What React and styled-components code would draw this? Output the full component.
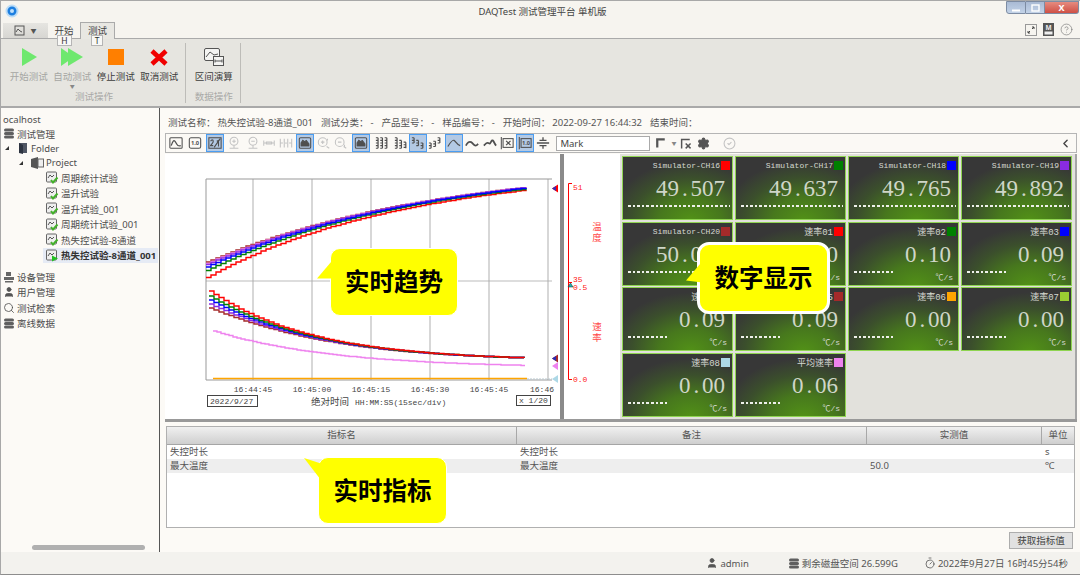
import React from "react";
import styled, { createGlobalStyle } from "styled-components";
import { User, Search, Settings, ChevronLeft, CircleCheck, CircleHelp, Timer } from "lucide-react";

const GlobalStyle = createGlobalStyle`
  html, body { margin: 0; padding: 0; background: #fff; }
  * { box-sizing: border-box; }
  #root { width: 1080px; height: 579px; overflow: hidden; }
`;

const sans = `"Noto Sans", "Noto Sans CJK SC", sans-serif`;
const mono = `"Liberation Mono", "Noto Sans CJK SC", monospace`;

const Page = styled.div`
  position: relative;
  width: 1080px;
  height: 575px;
  display: flex;
  flex-direction: column;
  font-family: ${sans};
  font-size: 9.5px;
  color: #555;
  background: #f7f5f0;
  border-top: 1px solid #a8a8a8;
  border-left: 1px solid #a8a8a8;
  border-bottom: 1px solid #8d8d8d;
`;

const TitleBar = styled.div`
  height: 20px;
  display: grid;
  grid-template-columns: 1fr auto 1fr;
  align-items: center;
  padding-left: 4px;
  background: #f6f4ef;
`;

const Title = styled.div`
  font-size: 9.5px;
  color: #444;
`;

const WinButtons = styled.div`
  justify-self: end;
  align-self: start;
  display: flex;
  height: 13px;
  margin-right: 1px;
`;

const WinButton = styled.div`
  width: ${(p) => p.$w}px;
  display: flex;
  align-items: center;
  justify-content: center;
  border: 1px solid #7d8ca3;
  border-left-width: ${(p) => (p.$first ? 1 : 0)}px;
  border-radius: ${(p) => (p.$first ? "0 0 0 3px" : p.$close ? "0 0 3px 0" : "0")};
  background: ${(p) =>
    p.$close ? "linear-gradient(#e58b7f, #cf5045)" : "linear-gradient(#a9bad4, #c3d3e8)"};
  color: #fff;
  font-size: 9px;
  font-weight: 700;
`;

const TabStrip = styled.div`
  position: relative;
  height: 17px;
  display: flex;
  align-items: flex-end;
  background: #f6f4ef;
`;

const QuickAccess = styled.div`
  width: 45px;
  height: 15px;
  margin-left: 2px;
  display: flex;
  align-items: center;
  justify-content: center;
  gap: 5px;
  background: linear-gradient(#e6e5e1, #d7d6d2);
  color: #555;
  font-size: 6px;
`;

const Tab = styled.div`
  width: ${(p) => p.$w}px;
  height: ${(p) => (p.$active ? 17 : 15)}px;
  text-align: center;
  line-height: 15px;
  font-size: 9.5px;
  color: #444;
  margin-bottom: ${(p) => (p.$active ? -1 : 0)}px;
  z-index: 1;
  background: ${(p) => (p.$active ? "#e8e7e2" : "transparent")};
  border: ${(p) => (p.$active ? "1px solid #aaa" : "none")};
  border-bottom: none;
`;

const KeyTip = styled.div`
  position: absolute;
  left: ${(p) => p.$left}px;
  top: 14px;
  width: ${(p) => p.$w}px;
  height: 11px;
  z-index: 2;
  text-align: center;
  line-height: 10px;
  font-size: 8.5px;
  background: #f8f8f6;
  border: 1px solid #b5b5b5;
  color: #333;
`;

const StripIcons = styled.div`
  margin-left: auto;
  margin-right: 7px;
  align-self: center;
  display: flex;
  align-items: center;
  gap: 5px;
  color: #666;
`;

const Ribbon = styled.div`
  height: 70px;
  display: flex;
  background: #e6e5e0;
  border-top: 1px solid #aaa;
  border-bottom: 2px solid #a9a9a9;
  padding: 4px 0 0 6px;
`;

const RibbonGroup = styled.div`
  display: flex;
  flex-direction: column;
  align-items: center;
  height: 60px;
  padding-right: 4px;
  margin-right: 6px;
  border-right: 1px solid #bdbcb8;
`;

const RibbonButtons = styled.div`
  flex: 1;
  display: flex;
`;

const RibbonButton = styled.div`
  width: 43.5px;
  display: flex;
  flex-direction: column;
  align-items: center;
  padding-top: 4px;
  color: ${(p) => (p.$off ? "#a5a5a3" : "#3c3c3c")};
  font-size: 9.5px;
  line-height: 13px;
  svg { margin-bottom: 3px; }
`;

const Caret = styled.div`
  font-size: 5px;
  line-height: 6px;
  color: #888;
`;

const GroupCaption = styled.div`
  color: #a9a9a7;
  font-size: 9.5px;
  line-height: 10px;
  margin-bottom: 1px;
`;

const Body = styled.div`
  flex: 1;
  min-height: 0;
  display: flex;
  background: #fcfaf6;
`;

const Sidebar = styled.div`
  position: relative;
  width: 159px;
  padding-top: 4px;
  border-right: 1px solid #555;
  color: #4d4d4d;
`;

const TreeRow = styled.div`
  height: ${(p) => p.$h || 14.5}px;
  display: flex;
  align-items: center;
  gap: 2px;
  padding-left: ${(p) => p.$indent || 0}px;
  margin-top: ${(p) => p.$mt || 0}px;
  white-space: nowrap;
`;

const Selected = styled.div`
  display: flex;
  align-items: center;
  gap: 2px;
  margin-left: -3px;
  padding-left: 3px;
  width: 115px;
  height: 15px;
  background: #e6ebf5;
  font-weight: 700;
  color: #333;
`;

const Fold = styled.span`
  width: 0;
  height: 0;
  margin-right: 6px;
  border-left: 4px solid transparent;
  border-bottom: 4px solid #333;
`;

const SideScroll = styled.div`
  position: absolute;
  left: 31px;
  right: 14px;
  bottom: 2px;
  height: 5px;
  border-radius: 3px;
  background: #b0b0b0;
`;

const Main = styled.div`
  flex: 1;
  min-width: 0;
  display: flex;
  flex-direction: column;
  padding: 0 3px 0 5px;
`;

const InfoRow = styled.div`
  height: 25px;
  padding: 3px 0 0 3px;
  display: flex;
  align-items: center;
  gap: 8px;
  color: #555;
  white-space: nowrap;
`;

const InfoValue = styled.span`
  margin-left: 2px;
`;

const Toolbar = styled.div`
  height: 20px;
  display: flex;
  align-items: center;
  padding-left: 1px;
  background: #fbf9f5;
  border: 1px solid #b5b5b5;
`;

const ToolSlot = styled.div`
  width: ${(p) => p.$w || 18.4}px;
  display: flex;
  justify-content: center;
`;

const ToolButton = styled.div`
  width: 16px;
  height: 16px;
  display: flex;
  align-items: center;
  justify-content: center;
  color: ${(p) => (p.$dim ? "#c3c3c3" : "#4f4f4f")};
  background: ${(p) => (p.$on ? "#b3c9e4" : "transparent")};
  outline: ${(p) => (p.$on ? "1px solid #4a9df2" : "none")};
`;

const MarkInput = styled.div`
  width: 94px;
  height: 15px;
  margin-left: 4px;
  padding-left: 3px;
  line-height: 14px;
  background: #fff;
  border: 1px solid #aaa;
  color: #444;
`;

const ToolRight = styled.div`
  flex: 1;
  display: flex;
  align-items: center;
  gap: 4px;
  margin-left: 5px;
  padding-right: 4px;
  color: #555;
`;

const Workspace = styled.div`
  height: 269px;
  display: flex;
  padding-top: 1px;
  border-bottom: 3px solid #999;
`;

const ChartPanel = styled.svg`
  display: block;
  width: 395px;
  height: 265px;
  background: #fff;
`;

const Splitter = styled.div`
  width: 4px;
  background: #8a8a8a;
`;

const AxisPanel = styled.svg`
  display: block;
  width: 56px;
  height: 265px;
  background: #fff;
`;

const CardsPanel = styled.div`
  flex: 1;
  display: grid;
  grid-template-columns: repeat(4, 111px);
  grid-auto-rows: 64px;
  gap: 1.6px 2px;
  padding: 2px 0 0 2px;
  background: #e2e1dc;
  border-right: 2px solid #a5a5a5;
`;

const Card = styled.div`
  display: flex;
  flex-direction: column;
  padding: 4px 2px 0 5px;
  border: 1px solid #8fd451;
  background: radial-gradient(ellipse 75% 95% at 62% 102%, #529117 0%, #47781d 38%, #3b4f2c 72%, #373737 100%);
  color: #d5d8d0;
`;

const CardHead = styled.div`
  display: flex;
  justify-content: flex-end;
  align-items: center;
  gap: 1px;
  height: 9px;
  font-family: ${mono};
  font-size: ${(p) => (p.$latin ? 8 : 9)}px;
  white-space: nowrap;
`;

const Swatch = styled.span`
  width: 9px;
  height: 9px;
  background: ${(p) => p.$color};
`;

const CardValue = styled.div`
  height: 30px;
  margin-top: 4px;
  padding-right: 5px;
  display: flex;
  justify-content: flex-end;
  align-items: center;
  font-family: "Liberation Serif", serif;
  font-size: 23px;
  color: #cfd6c8;
`;

const Digit = styled.span`
  width: 11.5px;
  text-align: center;
`;

const Dots = styled.div`
  width: ${(p) => (p.$wide ? 102 : 41)}px;
  height: 2px;
  margin-top: 1px;
  background: repeating-linear-gradient(90deg, #eef0ea 0 2.6px, transparent 2.6px 4.6px);
`;

const CardUnit = styled.div`
  height: 10px;
  padding-right: 3px;
  text-align: right;
  line-height: 9px;
  font-family: ${mono};
  font-size: 8px;
`;

const MetricTable = styled.div`
  height: 102px;
  margin: 4px 2px 0 1px;
  background: #fff;
  border: 1px solid #b0b0b0;
`;

const TableRow = styled.div`
  display: grid;
  grid-template-columns: 350px 350px 175px 1fr;
  height: ${(p) => (p.$head ? 18 : 14)}px;
  line-height: ${(p) => (p.$head ? 16 : 14)}px;
  background: ${(p) => (p.$head ? "linear-gradient(#f0f0f0, #cfcfcf)" : p.$alt ? "#eeeeee" : "#fff")};
  border-bottom: ${(p) => (p.$head ? "1px solid #a5a5a5" : "none")};
`;

const HeadCell = styled.div`
  text-align: center;
  color: #555;
  border-right: 1px solid #a8a8a8;
  &:last-child { border-right: none; }
`;

const Cell = styled.div`
  padding-left: 3px;
  color: #555;
`;

const TableFoot = styled.div`
  height: 24px;
  display: flex;
  justify-content: flex-end;
  align-items: center;
  padding-right: 4px;
`;

const FetchButton = styled.div`
  width: 64px;
  height: 17px;
  text-align: center;
  line-height: 15px;
  background: #e1e1e1;
  border: 1px solid #adadad;
  color: #444;
`;

const StatusBar = styled.div`
  height: 22px;
  display: flex;
  justify-content: flex-end;
  align-items: center;
  padding-right: 12px;
  gap: 26px;
  background: #f3f2ee;
  color: #555;
`;

const StatusItem = styled.div`
  display: flex;
  align-items: center;
  gap: 2px;
  white-space: nowrap;
  margin-right: ${(p) => p.$mr || 0}px;
`;

const Callout = styled.div`
  position: absolute;
  z-index: 5;
  left: ${(p) => p.$left}px;
  top: ${(p) => p.$top}px;
  width: ${(p) => p.$w}px;
  height: ${(p) => p.$h}px;
  padding-bottom: 3px;
  display: flex;
  align-items: center;
  justify-content: center;
  background: #ffff00;
  border: ${(p) => p.$line}px solid #fff;
  border-radius: ${(p) => p.$radius}px;
  color: #000;
  font-family: "Noto Sans CJK SC", sans-serif;
  font-size: 24.5px;
  font-weight: 700;

  &::before {
    content: "";
    position: absolute;
    left: ${(p) => p.$tailX}px;
    top: ${(p) => p.$tailY}px;
    width: 20px;
    height: 26px;
    background: #ffff00;
    clip-path: ${(p) => p.$tail};
  }
`;

const IconBox = ({ children, size = 14, vb = 16, ...rest }) => (
  <svg width={size} height={size} viewBox={`0 0 ${vb} ${vb}`} fill="none" stroke="currentColor" strokeWidth="1.2" {...rest}>
    {children}
  </svg>
);

// three stacked discs, used for the data nodes and the disk readout
const StackIcon = () => (
  <svg width="12" height="11" viewBox="0 0 12 11" fill="#5f5f5f">
    <rect x="1" y="0.5" width="10" height="3" rx="1.5" />
    <rect x="1" y="4" width="10" height="3" rx="1.5" />
    <rect x="1" y="7.5" width="10" height="3" rx="1.5" />
  </svg>
);

// a column of little "]" brackets, as in the stacked-axis buttons
const column = (x, y0, y1) => {
  let d = `M${x} ${y0}V${y1}`;
  for (let y = y0; y <= y1; y += 3) d += `M${x - 2.5} ${y}H${x}`;
  return d;
};

const bars = (ranges) => (
  <path d={ranges.map(([y0, y1], i) => column(3.5 + i * 5, y0, y1)).join("")} strokeWidth="1.4" />
);

const glyphs = {
  wave: <><rect x="1" y="2" width="14" height="12" rx="1" /><path d="M2.5 11c2-6 3-7 5-4s2 5 6 4" strokeWidth="1.4" /></>,
  num: <><rect x="1.5" y="2" width="13" height="12" rx="2" /><text x="8" y="10.5" fontSize="6.5" fontWeight="700" textAnchor="middle" fill="currentColor" stroke="none">1.0</text></>,
  waveCross: <><rect x="1" y="2" width="14" height="12" /><path d="M3 6c1-2 3-2 3 0s-2 3-3 5h3M14 3L7 13M10 6l2-1v7" strokeWidth="1.3" /></>,
  zoomIn: <><circle cx="8" cy="6" r="4.5" /><path d="M6 6h4M8 4v4M3 14h10M8 10.5V14" /></>,
  zoomOut: <><circle cx="8" cy="6" r="4.5" /><path d="M6 6h4M3 14h10M8 10.5V14" /></>,
  span: <path d="M2 5v6M14 5v6M2 8h3M11 8h3M5 7h6v2H5z" />,
  spanIn: <path d="M1.5 3v10M14.5 3v10M6 3v10M10 3v10M2 8h2.5M11.5 8H14M8 7v2" />,
  photo: <><rect x="1.5" y="2" width="13" height="12" rx="1.5" /><path d="M3.5 11.5V8l2-3 2 1.5L9.5 5l3 4v2.5z" fill="currentColor" /></>,
  lensPlus: <><circle cx="6.5" cy="7" r="5" /><path d="M4.5 7h4M6.5 5v4M12 3v2M11 12l3 2" /></>,
  lensMinus: <><circle cx="6.5" cy="7" r="5" /><path d="M4.5 7h4M12 10v3M11 12l3 2" /></>,
  bars1: bars([[2, 14], [2, 14], [2, 14]]),
  bars2: bars([[2, 14], [5, 14], [7, 14]]),
  bars3: bars([[2, 8], [5, 11], [8, 14]]),
  bars4: bars([[8, 14], [6, 12], [2, 8]]),
  curve: <path d="M1 12c3-5 5-8 7-7s3 5 7 6" strokeWidth="1.4" />,
  curve2: <path d="M1 11c2-4 4-5 6-4s3 4 5 4 2-1 3-2" strokeWidth="2" />,
  curve3: <path d="M1 11c2-2 3-4 5-3s2 1 3-1 2-3 3-1 2 4 3 5" strokeWidth="2" />,
  boxX: <><path d="M1.5 1v14" /><rect x="3.5" y="3" width="11.5" height="10" /><path d="M7 5.5l5 5M12 5.5l-5 5" strokeWidth="1.4" /></>,
  boxNum: <><path d="M1.5 1v14" /><rect x="3.5" y="3" width="11.5" height="10" /><text x="9.2" y="10.5" fontSize="6.5" fontWeight="700" textAnchor="middle" fill="currentColor" stroke="none">1.0</text></>,
  divide: <><path d="M1 8h14M4 5h8M4 11h8" strokeWidth="1.5" /><path d="M8 1.5v3M8 11.5v3" strokeWidth="1.5" /></>,
};

const tools = [
  { g: "wave" }, { g: "num", w: 20 }, { g: "waveCross", on: true, w: 19 },
  { g: "zoomIn", dim: true, w: 20 }, { g: "zoomOut", dim: true, w: 17 }, { g: "span", dim: true, w: 16 },
  { g: "spanIn", dim: true, w: 17 }, { g: "photo", on: true, w: 21 }, { g: "lensPlus", dim: true, w: 18 },
  { g: "lensMinus", dim: true, w: 16 }, { g: "photo", on: true, w: 23 }, { g: "bars1", w: 20 },
  { g: "bars2", w: 17 }, { g: "bars3", on: true, w: 17 }, { g: "bars4", w: 18 },
  { g: "curve", on: true, w: 19 }, { g: "curve2", w: 18 }, { g: "curve3", w: 17 },
  { g: "boxX", w: 18 }, { g: "boxNum", on: true, w: 18 }, { g: "divide", w: 18 },
];

const cards = [
  ["Simulator-CH16", "#ff0000", "49.507", true],
  ["Simulator-CH17", "#008000", "49.637", true],
  ["Simulator-CH18", "#0000ff", "49.765", true],
  ["Simulator-CH19", "#8a2be2", "49.892", true],
  ["Simulator-CH20", "#a52a2a", "50.016", true],
  ["速率01", "#ff0000", "0.10"],
  ["速率02", "#008000", "0.10"],
  ["速率03", "#0000ff", "0.09"],
  ["速率04", "#8a2be2", "0.09"],
  ["速率05", "#a52a2a", "0.09"],
  ["速率06", "#ffa500", "0.00"],
  ["速率07", "#9acd32", "0.00"],
  ["速率08", "#add8e6", "0.00"],
  ["平均速率", "#ee82ee", "0.06"],
];

const testItems = ["周期统计试验", "温升试验", "温升试验_001", "周期统计试验_001", "热失控试验-8通道"];

// screen coordinates: the chart svg uses a viewBox equal to its place on the page
const stepped = (x0, x1, dx, fn) => {
  let d = `M${x0} ${fn(x0).toFixed(1)}`;
  for (let x = x0 + dx; x <= x1; x += dx) {
    d += `H${x}V${(Math.round(fn(x) * 2) / 2).toFixed(1)}`;
  }
  return d;
};

const upper = [
  ["#ff0000", 9, 1.5],
  ["#a52a2a", -4.5, -0.5],
  ["#ee82ee", -3, -0.5],
  ["#8a2be2", -2, -0.5],
  ["#008000", 3, 0.5],
  ["#0000ff", 0, 0],
];

const lower = [
  ["#a52a2a", 17, 0],
  ["#8a2be2", 13, 0],
  ["#0000ff", 9, 0],
  ["#008000", 5, 0],
  ["#ff0000", 0, 0],
];

const upperY = (off, end) => (x) =>
  165 + 103 * Math.exp(-(x - 206) / 220) + off * Math.exp(-(x - 206) / 110) + end;
const lowerY = (off) => (x) => 362 - 70 * Math.exp(-(x - 209) / 102) + off * Math.exp(-(x - 209) / 60);
const pinkY = (x) => 369 - 37 * Math.exp(-(x - 213) / 118);

const ticks = [
  [253, "16:44:45"],
  [312, "16:45:00"],
  [371, "16:45:15"],
  [430, "16:45:30"],
  [489, "16:45:45"],
];

const Marker = ({ y, color, x = 552 }) => <path d={`M${x} ${y}l6-4v8z`} fill={color} />;

const TrendChart = () => (
  <ChartPanel viewBox="165 155 395 265">
    <g stroke="#c2c2c2" strokeWidth="1.3">
      {[253, 312, 371, 430, 489, 548].map((x) => (
        <path key={x} d={`M${x} 180V381`} />
      ))}
    </g>
    <path d="M206 282H552" stroke="#aaa" strokeWidth="0.8" />
    <path d="M552 180H206V381H552" stroke="#999" strokeWidth="1" fill="none" />
    <path d="M527 380H552" stroke="#b9c8cf" strokeDasharray="2 1" />
    <g fill="none" strokeWidth="1.4">
      {upper.map(([c, off, end]) => (
        <path key={c} d={stepped(206, 527, 5, upperY(off, end))} stroke={c} />
      ))}
      {lower.map(([c, off]) => (
        <path key={c} d={stepped(209, 527, 5, lowerY(off))} stroke={c} />
      ))}
      <path d={stepped(213, 527, 4, pinkY)} stroke="#ee82ee" />
    </g>
    <path d="M213 379.5H527" stroke="#ffa500" strokeWidth="1.5" />
    <Marker y={189.5} color="#ff0000" />
    <path d="M552 189.5l4-2.5v5z" fill="#3a2ab5" />
    <Marker y={359.5} color="#a52a2a" />
    <path d="M552 359.5l4-2.5v5z" fill="#2a2ab5" />
    <Marker y={367} color="#ee82ee" />
    <Marker y={380} color="#add8e6" />
    <g fontFamily="Liberation Mono, monospace" fontSize="8" fill="#444" textAnchor="middle">
      {ticks.map(([x, t]) => (
        <text key={t} x={x} y="393">{t}</text>
      ))}
      <text x="542" y="393">16:46</text>
    </g>
    <g fontFamily="Liberation Mono, monospace" fontSize="8" fill="#444">
      <rect x="207.5" y="396.5" width="50" height="11" fill="none" stroke="#444" />
      <text x="210" y="404.5">2022/9/27</text>
      <rect x="516.5" y="396.5" width="34" height="10" fill="none" stroke="#444" />
      <text x="519" y="404">x 1/20</text>
      <text x="355" y="406">HH:MM:SS(15sec/div)</text>
      <text x="311" y="406" fontFamily="Noto Sans CJK SC, sans-serif" fontSize="9.5">绝对时间</text>
    </g>
  </ChartPanel>
);

const RightAxis = () => (
  <AxisPanel viewBox="564 155 56 265">
    <path d="M572 184.5H568.5V380.5H572M568 283.5H572" stroke="#ff0000" fill="none" />
    <path d="M568 288l2.5-4 2.5 4z" fill="#1fb5b5" stroke="#222" strokeWidth="0.5" />
    <g fontFamily="Liberation Mono, monospace" fontSize="8" fill="#ff2020">
      <text x="573" y="191">51</text>
      <text x="573" y="283">35</text>
      <text x="573" y="291">0.5</text>
      <text x="573" y="383">0.0</text>
    </g>
    <g fontFamily="Noto Sans CJK SC, sans-serif" fontSize="9.5" fill="#ff4848" textAnchor="start" style={{ writingMode: "vertical-rl" }}>
      <text x="597" y="223" letterSpacing="1">温度</text>
      <text x="597" y="323" letterSpacing="1">速率</text>
    </g>
  </AxisPanel>
);

const TestIcon = ({ running }) => (
  <svg width="13" height="13" viewBox="0 0 13 13" fill="none">
    <rect x="0.5" y="1" width="10" height="10" rx="1" fill="#eee" stroke="#666" />
    <path d="M2 7l2-3 2 2 2-2" stroke="#555" />
    {running ? (
      <path d="M6 6.5l6 3-6 3z" fill="#22c122" />
    ) : (
      <path d="M5 9l2 2.5 4.5-5" stroke="#43b02a" strokeWidth="2" />
    )}
  </svg>
);

const App = () => (
  <Page>
    <GlobalStyle />
    <TitleBar>
      <svg width="14" height="14" viewBox="0 0 14 14">
        <circle cx="7" cy="7" r="5.5" fill="#1d7fe0" stroke="#bcdcf6" strokeWidth="2" />
        <circle cx="7" cy="7" r="2" fill="#bfe0fb" />
      </svg>
      <Title>DAQTest 测试管理平台 单机版</Title>
      <WinButtons>
        <WinButton $w={20} $first>
          <svg width="10" height="8" viewBox="0 0 10 8"><path d="M1 6.5h8" stroke="#fff" strokeWidth="2" /></svg>
        </WinButton>
        <WinButton $w={19}>
          <svg width="9" height="8" viewBox="0 0 9 8"><rect x="1" y="1" width="7" height="6" fill="none" stroke="#fff" strokeWidth="1.4" /></svg>
        </WinButton>
        <WinButton $w={34} $close>X</WinButton>
      </WinButtons>
    </TitleBar>

    <TabStrip>
      <QuickAccess>
        <svg width="11" height="11" viewBox="0 0 11 11" fill="none" stroke="#555">
          <rect x="1" y="1" width="9" height="9" />
          <path d="M2 7l2-3 2 2 2 1" />
        </svg>
        ▼
      </QuickAccess>
      <Tab $w={32}>开始</Tab>
      <Tab $w={35} $active>测试</Tab>
      <KeyTip $left={56} $w={15}>H</KeyTip>
      <KeyTip $left={90} $w={12}>T</KeyTip>
      <StripIcons>
        <svg width="12" height="12" viewBox="0 0 12 12" fill="none">
          <rect x="0.5" y="0.5" width="11" height="11" stroke="#999" />
          <path d="M3 9l2-2M9 3L7 5M3 9h2M3 9V7M9 3H7M9 3v2" stroke="#444" />
        </svg>
        <svg width="13" height="13" viewBox="0 0 13 13">
          <path d="M1 0h11v13H1z" fill="#555" />
          <rect x="2.5" y="8.5" width="8" height="3" fill="#eee" />
          <text x="6.5" y="7" fontSize="6.5" textAnchor="middle" fill="#eee" fontWeight="700">M</text>
        </svg>
        <CircleHelp size={13} strokeWidth={1.2} color="#777" />
      </StripIcons>
    </TabStrip>

    <Ribbon>
      <RibbonGroup>
        <RibbonButtons>
          <RibbonButton $off>
            <svg width="20" height="20" viewBox="0 0 20 20"><path d="M3 1l15 9-15 9z" fill="#6ee86e" /></svg>
            开始测试
          </RibbonButton>
          <RibbonButton $off>
            <svg width="24" height="20" viewBox="0 0 24 20"><path d="M1 1l13 9-13 9z" fill="#6ee86e" /><path d="M8 1l15 9-15 9z" fill="#6ee86e" /></svg>
            自动测试
            <Caret>▼</Caret>
          </RibbonButton>
          <RibbonButton>
            <svg width="20" height="20" viewBox="0 0 20 20"><rect x="2" y="2" width="16" height="16" fill="#ff7f00" /></svg>
            停止测试
          </RibbonButton>
          <RibbonButton>
            <svg width="20" height="20" viewBox="0 0 20 20"><path d="M3 4l14 13M17 4L3 17" stroke="#f00000" strokeWidth="4.6" /></svg>
            取消测试
          </RibbonButton>
        </RibbonButtons>
        <GroupCaption>测试操作</GroupCaption>
      </RibbonGroup>
      <RibbonGroup>
        <RibbonButtons>
          <RibbonButton>
            <svg width="22" height="20" viewBox="0 0 22 20" fill="#f4f4f2" stroke="#555">
              <rect x="1.5" y="1.5" width="15" height="12" rx="1.5" />
              <path d="M3 10l4-5 4 3 4-1" fill="none" />
              <rect x="10.5" y="9.5" width="10" height="9" />
              <path d="M12 14h7M12 12.5v3M19 12.5v3" fill="none" />
            </svg>
            区间演算
          </RibbonButton>
        </RibbonButtons>
        <GroupCaption>数据操作</GroupCaption>
      </RibbonGroup>
    </Ribbon>

    <Body>
      <Sidebar>
        <TreeRow $indent={2}>ocalhost</TreeRow>
        <TreeRow $indent={2}>
          <StackIcon />
          测试管理
        </TreeRow>
        <TreeRow $indent={4}>
          <Fold />
          <svg width="12" height="12" viewBox="0 0 12 12">
            <path d="M2 1h8v10H2z" fill="#4f5663" />
            <path d="M2 1l4 2v9l-4-1z" fill="#2c3340" />
          </svg>
          Folder
        </TreeRow>
        <TreeRow $indent={18}>
          <Fold />
          <svg width="13" height="12" viewBox="0 0 13 12">
            <path d="M0 2l7-2v12l-7-2z" fill="#555" />
            <rect x="7" y="2" width="5.5" height="8" fill="#eee" stroke="#666" />
          </svg>
          Project
        </TreeRow>
        {testItems.map((t) => (
          <TreeRow key={t} $indent={45} $h={15.5}>
            <TestIcon />
            {t}
          </TreeRow>
        ))}
        <TreeRow $indent={45} $h={15.5}>
          <Selected>
            <TestIcon running />
            热失控试验-8通道_001
          </Selected>
        </TreeRow>
        <TreeRow $indent={2} $mt={6} $h={15.5}>
          <svg width="12" height="12" viewBox="0 0 12 12">
            <path d="M3 1h5v4H3zM1 6h10v3H1zM2 10h8v1.5H2z" fill="#666" />
          </svg>
          设备管理
        </TreeRow>
        <TreeRow $indent={2} $h={15.5}>
          <User size={12} fill="#555" strokeWidth={1.5} />
          用户管理
        </TreeRow>
        <TreeRow $indent={2} $h={15.5}>
          <Search size={12} strokeWidth={1.6} />
          测试检索
        </TreeRow>
        <TreeRow $indent={2} $h={15.5}>
          <StackIcon />
          离线数据
        </TreeRow>
        <SideScroll />
      </Sidebar>

      <Main>
        <InfoRow>
          <span>测试名称：<InfoValue>热失控试验-8通道_001</InfoValue></span>
          <span>测试分类：<InfoValue>-</InfoValue></span>
          <span>产品型号：<InfoValue>-</InfoValue></span>
          <span>样品编号：<InfoValue>-</InfoValue></span>
          <span>开始时间：<InfoValue>2022-09-27 16:44:32</InfoValue></span>
          <span>结束时间：</span>
        </InfoRow>

        <Toolbar>
          {tools.map((t, i) => (
            <ToolSlot key={i} $w={t.w}>
              <ToolButton $on={t.on} $dim={t.dim}>
                <IconBox>{glyphs[t.g]}</IconBox>
              </ToolButton>
            </ToolSlot>
          ))}
          <MarkInput>Mark</MarkInput>
          <ToolRight>
            <IconBox size={12}>
              <path d="M3 14V3h10" strokeWidth="3" />
            </IconBox>
            <Caret>▼</Caret>
            <IconBox size={13}>
              <path d="M2 14V3h10M7 8l6 6M13 8l-6 6" strokeWidth="1.8" />
            </IconBox>
            <Settings size={13} fill="#555" strokeWidth={2} />
            <CircleCheck size={13} color="#c4c4c4" style={{ marginLeft: 9 }} />
            <ChevronLeft size={13} strokeWidth={2.6} color="#444" style={{ marginLeft: "auto" }} />
          </ToolRight>
        </Toolbar>

        <Workspace>
          <TrendChart />
          <Splitter />
          <RightAxis />
          <CardsPanel>
            {cards.map(([name, color, value, wide]) => (
              <Card key={name}>
                <CardHead $latin={wide}>
                  {name}
                  <Swatch $color={color} />
                </CardHead>
                <CardValue>
                  {value.split("").map((c, i) => (
                    <Digit key={i}>{c}</Digit>
                  ))}
                </CardValue>
                <Dots $wide={wide} />
                {!wide && <CardUnit>℃/s</CardUnit>}
              </Card>
            ))}
          </CardsPanel>
        </Workspace>

        <MetricTable>
          <TableRow $head>
            <HeadCell>指标名</HeadCell>
            <HeadCell>备注</HeadCell>
            <HeadCell>实测值</HeadCell>
            <HeadCell>单位</HeadCell>
          </TableRow>
          <TableRow>
            <Cell>失控时长</Cell>
            <Cell>失控时长</Cell>
            <Cell />
            <Cell>s</Cell>
          </TableRow>
          <TableRow $alt>
            <Cell>最大温度</Cell>
            <Cell>最大温度</Cell>
            <Cell>50.0</Cell>
            <Cell>℃</Cell>
          </TableRow>
        </MetricTable>

        <TableFoot>
          <FetchButton>获取指标值</FetchButton>
        </TableFoot>
      </Main>
    </Body>

    <StatusBar>
      <StatusItem $mr={13}>
        <User size={12} fill="#555" strokeWidth={1.5} />
        admin
      </StatusItem>
      <StatusItem>
        <StackIcon />
        剩余磁盘空间 26.599G
      </StatusItem>
      <StatusItem>
        <Timer size={12} strokeWidth={1.6} />
        2022年9月27日 16时45分54秒
      </StatusItem>
    </StatusBar>

    <Callout
      $left={329}
      $top={247}
      $w={128}
      $h={68}
      $line={1}
      $radius={10}
      $tailX={-14}
      $tailY={6}
      $tail="polygon(100% 0, 0 90%, 100% 90%)"
    >
      实时趋势
    </Callout>
    <Callout
      $left={696}
      $top={241}
      $w={133}
      $h={72}
      $line={3}
      $radius={12}
      $tailX={-14}
      $tailY={12}
      $tail="polygon(100% 0, 0 90%, 100% 100%)"
    >
      数字显示
    </Callout>
    <Callout
      $left={317}
      $top={456}
      $w={129}
      $h={67}
      $line={1}
      $radius={10}
      $tailX={-15}
      $tailY={0}
      $tail="polygon(0 0, 100% 25%, 100% 100%)"
    >
      实时指标
    </Callout>
  </Page>
);

export default App;
